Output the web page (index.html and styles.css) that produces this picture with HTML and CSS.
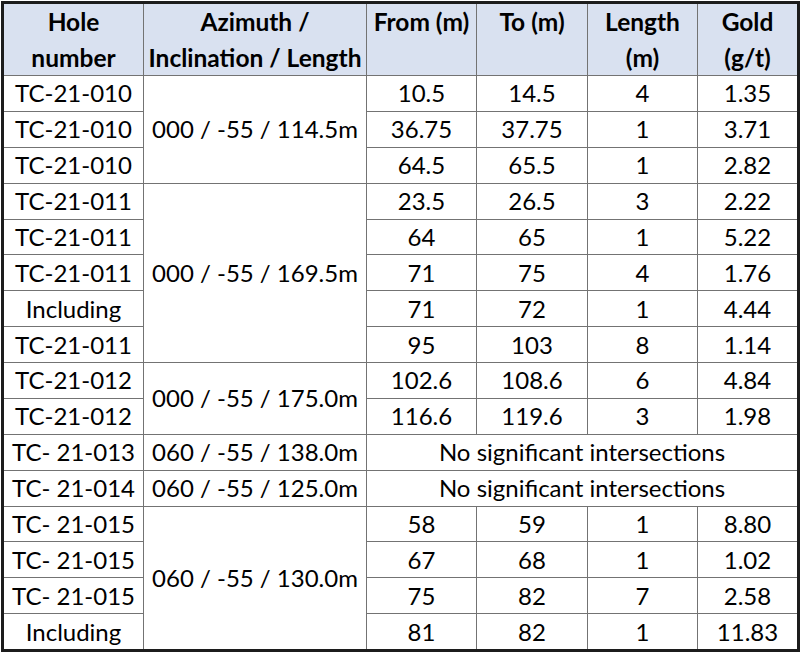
FILE: index.html
```html
<!DOCTYPE html>
<html>
<head>
<meta charset="utf-8">
<link rel="stylesheet" href="styles.css">
</head>
<body>
<table class="drill">
  <colgroup>
    <col class="c-hole">
    <col class="c-az">
    <col class="c-from">
    <col class="c-to">
    <col class="c-len">
    <col class="c-gold">
  </colgroup>
  <thead>
    <tr class="head">
      <th>Hole<br>number</th>
      <th>Azimuth /<br>Inclination / Length</th>
      <th>From (m)</th>
      <th>To (m)</th>
      <th>Length<br>(m)</th>
      <th>Gold<br>(g/t)</th>
    </tr>
  </thead>
  <tbody>
    <tr><td>TC-21-010</td><td rowspan="3">000 / -55 / 114.5m</td><td>10.5</td><td>14.5</td><td>4</td><td>1.35</td></tr>
    <tr><td>TC-21-010</td><td>36.75</td><td>37.75</td><td>1</td><td>3.71</td></tr>
    <tr><td>TC-21-010</td><td>64.5</td><td>65.5</td><td>1</td><td>2.82</td></tr>
    <tr><td>TC-21-011</td><td rowspan="5">000 / -55 / 169.5m</td><td>23.5</td><td>26.5</td><td>3</td><td>2.22</td></tr>
    <tr><td>TC-21-011</td><td>64</td><td>65</td><td>1</td><td>5.22</td></tr>
    <tr><td>TC-21-011</td><td>71</td><td>75</td><td>4</td><td>1.76</td></tr>
    <tr><td>Including</td><td>71</td><td>72</td><td>1</td><td>4.44</td></tr>
    <tr><td>TC-21-011</td><td>95</td><td>103</td><td>8</td><td>1.14</td></tr>
    <tr><td>TC-21-012</td><td rowspan="2">000 / -55 / 175.0m</td><td>102.6</td><td>108.6</td><td>6</td><td>4.84</td></tr>
    <tr><td>TC-21-012</td><td>116.6</td><td>119.6</td><td>3</td><td>1.98</td></tr>
    <tr><td>TC- 21-013</td><td>060 / -55 / 138.0m</td><td colspan="4">No significant intersections</td></tr>
    <tr><td>TC- 21-014</td><td>060 / -55 / 125.0m</td><td colspan="4">No significant intersections</td></tr>
    <tr><td>TC- 21-015</td><td rowspan="4">060 / -55 / 130.0m</td><td>58</td><td>59</td><td>1</td><td>8.80</td></tr>
    <tr><td>TC- 21-015</td><td>67</td><td>68</td><td>1</td><td>1.02</td></tr>
    <tr><td>TC- 21-015</td><td>75</td><td>82</td><td>7</td><td>2.58</td></tr>
    <tr><td>Including</td><td>81</td><td>82</td><td>1</td><td>11.83</td></tr>
  </tbody>
</table>
</body>
</html>
```
FILE: styles.css
```css
html, body {
  margin: 0;
  padding: 0;
  background: #ffffff;
}
.drill {
  width: 796px;
  margin: 1px 0 0 1px;
  border-collapse: collapse;
  table-layout: fixed;
  border: 3px solid #1c1c1c;
  font-family: Lato, "Open Sans", sans-serif;
  font-size: 24px;
  color: #000000;
}
.c-hole { width: 141px; }
.c-az { width: 223px; }
.c-from { width: 110px; }
.c-to { width: 111px; }
.c-len { width: 110px; }
.c-gold { width: 101px; }
.drill th,
.drill td {
  border: 1px solid #737373;
  text-align: center;
  padding: 0;
}
.drill th {
  background: #d9e1f0;
  font-weight: bold;
  font-size: 24.5px;
  vertical-align: top;
  line-height: 35.5px;
  height: 71px;
}
.drill td {
  height: 34.875px;
  line-height: 34px;
  vertical-align: middle;
}
```
